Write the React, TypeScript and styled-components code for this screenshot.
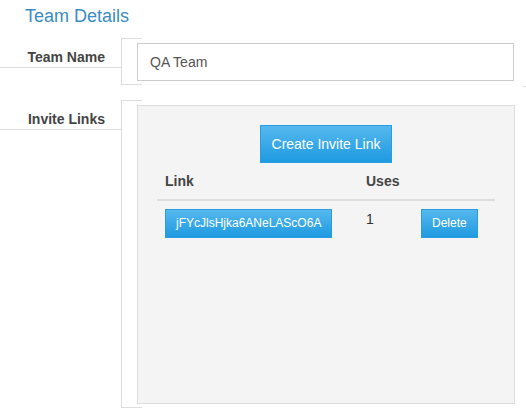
import React from "react";
import styled, { createGlobalStyle } from "styled-components";

const Global = createGlobalStyle`
  html, body { margin: 0; padding: 0; background: #fff; }
  body { font-family: "Liberation Sans", Arial, sans-serif; color: #333; }
  * { box-sizing: border-box; }
`;

const Page = styled.div`
  width: 526px;
  padding-top: 6px;
`;

const Title = styled.h2`
  margin: 0 0 12px 25px;
  font-size: 18px;
  line-height: 20px;
  font-weight: normal;
  color: #3a8cc6;
`;

const Row = styled.div<{ $gap?: number }>`
  display: grid;
  grid-template-columns: 121px 1fr;
  margin-bottom: ${(p) => p.$gap ?? 0}px;
  position: relative;
`;

const Label = styled.div`
  align-self: start;
  text-align: right;
  padding: 10px 16px 1px 0;
  font-size: 14px;
  line-height: 18px;
  font-weight: bold;
  color: #444;
  border-bottom: 1px solid #ddd;
`;

const Bracket = styled.div`
  position: relative;
  border-left: 1px solid #ddd;
  padding: 5px 12px 4px 15px;
  &::before,
  &::after {
    content: "";
    position: absolute;
    left: 0;
    width: 20px;
    height: 1px;
    background: #ddd;
  }
  &::before { top: 0; }
  &::after { bottom: 0; }
`;

const RightTick = styled.span`
  position: absolute;
  right: 0;
  bottom: -2px;
  width: 3px;
  height: 1px;
  background: #ddd;
`;

const Input = styled.input`
  display: block;
  width: 100%;
  height: 38px;
  border: 1px solid #ccc;
  padding: 0 12px;
  font-family: inherit;
  font-size: 14px;
  color: #555;
  background: #fff;
  outline: none;
`;

const Panel = styled.div`
  height: 299px;
  margin-right: -1px;
  background: #f4f4f4;
  border: 1px solid #ddd;
  padding: 19px 19px 20px 19px;
  display: flex;
  flex-direction: column;
  align-items: center;
`;

const Button = styled.button<{ $size?: "lg" | "sm" }>`
  font-family: inherit;
  color: #fff;
  border: 1px solid #2a9de2;
  background: linear-gradient(to bottom, #56b8ee 0%, #1e9ae0 100%);
  cursor: pointer;
  border-radius: 0;
  white-space: nowrap;
  font-size: ${(p) => (p.$size === "lg" ? "14px" : "12px")};
  line-height: ${(p) => (p.$size === "lg" ? "18px" : "15px")};
  padding: ${(p) => (p.$size === "lg" ? "9px 11px" : "6px 10px")};
`;

const Table = styled.table`
  width: 100%;
  border-collapse: collapse;
  font-size: 14px;
  line-height: 20px;
`;

const Th = styled.th<{ $w?: number }>`
  text-align: left;
  padding: 8px;
  font-weight: bold;
  color: #444;
  border-bottom: 2px solid #ddd;
  width: ${(p) => (p.$w ? `${p.$w}px` : "auto")};
`;

const Td = styled.td`
  padding: 8px;
  vertical-align: top;
  color: #333;
`;

const UsesText = styled.span`
  display: inline-block;
  margin-top: -1px;
`;

export default function App() {
  return (
    <>
      <Global />
      <Page>
        <Title>Team Details</Title>
        <Row $gap={15}>
          <Label>Team Name</Label>
          <Bracket>
            <Input defaultValue="QA Team" />
          </Bracket>
          <RightTick />
        </Row>
        <Row>
          <Label>Invite Links</Label>
          <Bracket>
            <Panel>
              <Button $size="lg">Create Invite Link</Button>
              <Table>
                <thead>
                  <tr>
                    <Th $w={201}>Link</Th>
                    <Th $w={55}>Uses</Th>
                    <Th />
                  </tr>
                </thead>
                <tbody>
                  <tr>
                    <Td>
                      <Button $size="sm">jFYcJlsHjka6ANeLAScO6A</Button>
                    </Td>
                    <Td>
                      <UsesText>1</UsesText>
                    </Td>
                    <Td>
                      <Button $size="sm">Delete</Button>
                    </Td>
                  </tr>
                </tbody>
              </Table>
            </Panel>
          </Bracket>
        </Row>
      </Page>
    </>
  );
}
